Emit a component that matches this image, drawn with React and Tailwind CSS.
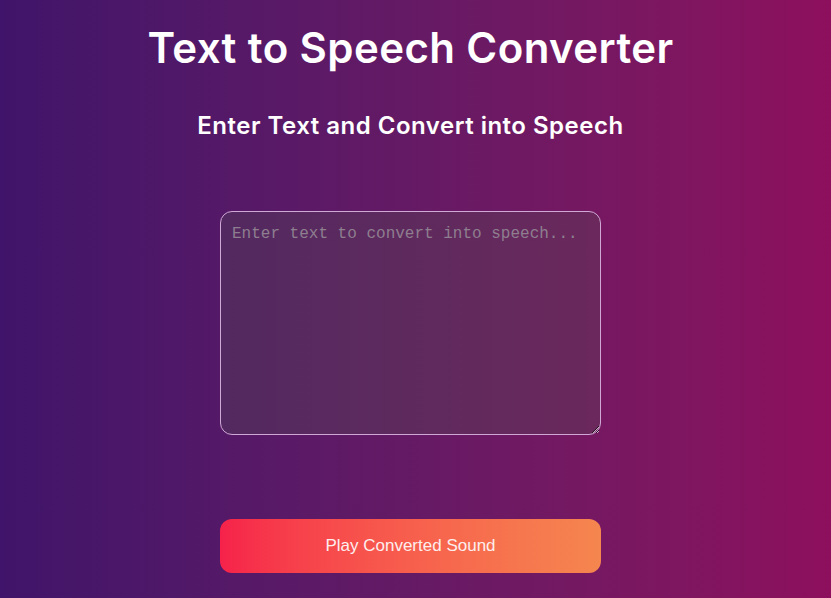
export default function App() {
  return (
    <div className="min-h-screen w-full bg-gradient-to-r from-[#40146a] to-[#8d0f5d] flex">
      <div className="w-[821px] flex flex-col items-center font-['Inter',sans-serif] text-white">
        {/* heading */}
        <h1 className="mt-[23px] text-[42px] leading-[50px] font-semibold tracking-[0.4px]">
          Text to Speech Converter
        </h1>
        <h2 className="mt-[38px] text-[24px] leading-[30px] font-semibold tracking-[0.5px]">
          Enter Text and Convert into Speech
        </h2>
        <textarea
          placeholder="Enter text to convert into speech..."
          className="mt-[70px] w-[381px] h-[224px] rounded-[12px] border border-[#d0a8d6] bg-[rgba(80,80,80,0.3)] px-[11px] py-[12px] font-['Liberation_Mono',monospace] text-[16px] leading-[20px] text-white placeholder:text-[#8e7e8f] outline-none resize"
        />
        <button className="mt-[84px] w-[381px] h-[54px] rounded-[12px] bg-gradient-to-r from-[#f6214a] to-[#f5864f] font-['Liberation_Sans',Arial,sans-serif] text-[17px] text-[#fdeeee]">
          Play Converted Sound
        </button>
      </div>
    </div>
  );
}
